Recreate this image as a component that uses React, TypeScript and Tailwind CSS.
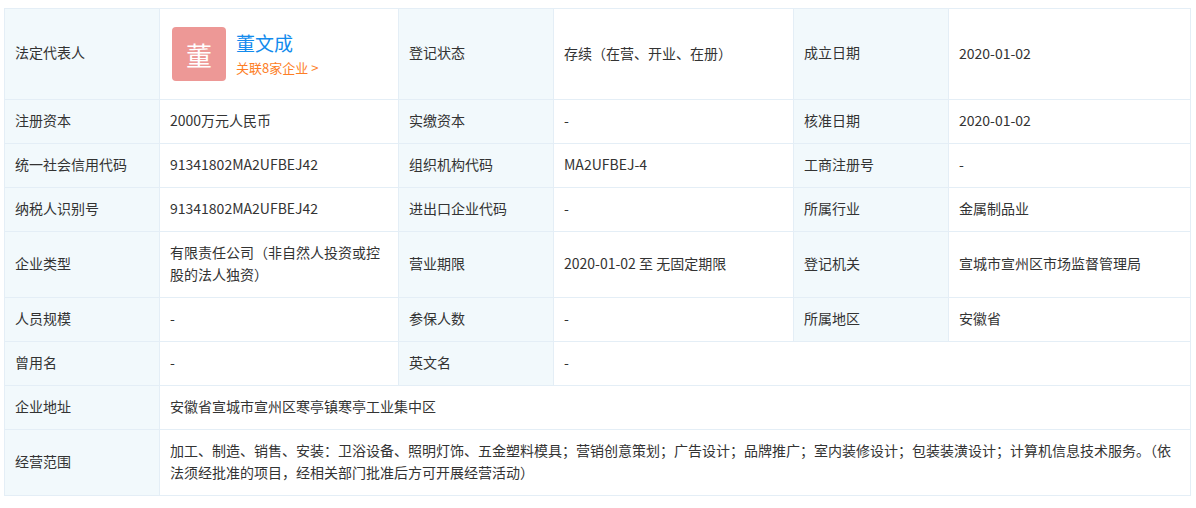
const L = "bg-[#f2f9fc] border border-[#e4eef6] px-[10px] pb-[3px] text-[14px] text-[#333] align-middle";
const V = "bg-white border border-[#e4eef6] px-[10px] pb-[3px] text-[14px] text-[#333] align-middle leading-[22px]";

export default function App() {
  const rows: [string, string, string, string, string, string, number][] = [
    ["注册资本", "2000万元人民币", "实缴资本", "-", "核准日期", "2020-01-02", 44],
    ["统一社会信用代码", "91341802MA2UFBEJ42", "组织机构代码", "MA2UFBEJ-4", "工商注册号", "-", 44],
    ["纳税人识别号", "91341802MA2UFBEJ42", "进出口企业代码", "-", "所属行业", "金属制品业", 44],
    ["企业类型", "有限责任公司（非自然人投资或控股的法人独资）", "营业期限", "2020-01-02 至 无固定期限", "登记机关", "宣城市宣州区市场监督管理局", 66],
    ["人员规模", "-", "参保人数", "-", "所属地区", "安徽省", 44],
  ];
  return (
    <div className="pt-[8px] pl-[4px] bg-white w-[1196px] h-[508px]" style={{ fontFamily: '"Noto Sans CJK SC", "Microsoft YaHei", sans-serif' }}>
      <table className="border-collapse table-fixed w-[1186px]">
        <colgroup>
          <col className="w-[155px]" /><col className="w-[239px]" /><col className="w-[155px]" />
          <col className="w-[240px]" /><col className="w-[155px]" /><col className="w-[242px]" />
        </colgroup>
        <tbody>
          <tr className="h-[91px]">
            <td className={L}>法定代表人</td>
            <td className="bg-white border border-[#e4eef6] px-[12px] align-middle">
              <div className="flex items-center gap-[10px]">
                <div className="w-[54px] h-[54px] rounded-[4px] bg-[#ed9896] text-white text-[26px] flex items-center justify-center">董</div>
                <div className="flex flex-col">
                  <span className="text-[19px] text-[#128bed] leading-[28px]">董文成</span>
                  <span className="text-[13px] text-[#fd7e26] leading-[22px]">关联8家企业 &gt;</span>
                </div>
              </div>
            </td>
            <td className={L}>登记状态</td>
            <td className={V}>存续（在营、开业、在册）</td>
            <td className={L}>成立日期</td>
            <td className={V}>2020-01-02</td>
          </tr>
          {rows.map((r, i) => (
            <tr key={i} style={{ height: r[6] }}>
              <td className={L}>{r[0]}</td>
              <td className={V}>{r[1]}</td>
              <td className={L}>{r[2]}</td>
              <td className={V}>{r[3]}</td>
              <td className={L}>{r[4]}</td>
              <td className={V}>{r[5]}</td>
            </tr>
          ))}
          <tr className="h-[44px]">
            <td className={L}>曾用名</td>
            <td className={V}>-</td>
            <td className={L}>英文名</td>
            <td className={V} colSpan={3}>-</td>
          </tr>
          <tr className="h-[44px]">
            <td className={L}>企业地址</td>
            <td className={V} colSpan={5}>安徽省宣城市宣州区寒亭镇寒亭工业集中区</td>
          </tr>
          <tr className="h-[66px]">
            <td className={L}>经营范围</td>
            <td className={V} colSpan={5}>加工、制造、销售、安装：卫浴设备、照明灯饰、五金塑料模具；营销创意策划；广告设计；品牌推广；室内装修设计；包装装潢设计；计算机信息技术服务。（依法须经批准的项目，经相关部门批准后方可开展经营活动）</td>
          </tr>
        </tbody>
      </table>
    </div>
  );
}
